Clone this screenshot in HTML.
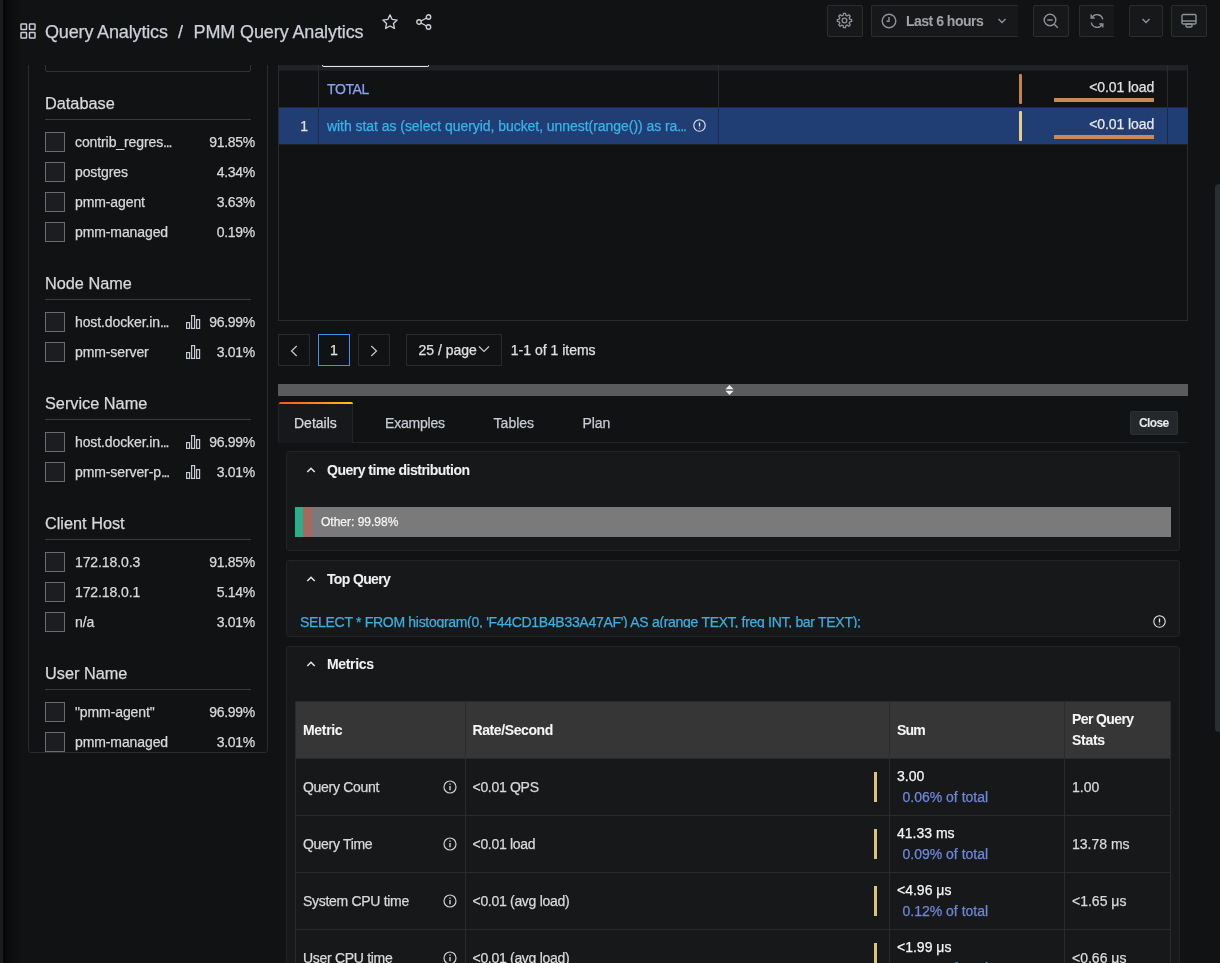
<!DOCTYPE html><html><head><meta charset="utf-8"><style>
*{box-sizing:border-box;margin:0;padding:0}
html,body{width:1220px;height:963px;overflow:hidden;background:#111214;font-family:"Liberation Sans",sans-serif;color:#d8d9da}
.a{position:absolute}
.t{position:absolute;white-space:nowrap;line-height:1;-webkit-text-stroke:0.25px currentColor}
.b{font-weight:bold;-webkit-text-stroke:0.05px currentColor}
.btn{position:absolute;top:5px;height:32px;border:1px solid #2b2e31;background:#17181a;border-radius:2px}
.cb{position:absolute;width:20px;height:20px;border:1px solid #6b6c70;background:#1c1d20}
.ul{position:absolute;width:206px;height:1px;background:#3a3b3f}
</style></head><body><div id="root" style="position:absolute;left:0;top:0;width:1220px;height:963px;will-change:transform">
<div class="a" style="left:0;top:0;width:3px;height:963px;background:#1b1c20"></div>
<div class="a" style="left:3px;top:0;width:18px;height:963px;background:linear-gradient(90deg,#08090a,rgba(17,18,20,0))"></div>
<div class="a" style="left:28px;top:30px;width:240px;height:723px;border:1px solid #2b2c2f;border-radius:3px"></div>
<div class="a" style="left:45px;top:30px;width:206px;height:42px;border:1px solid #2f3336;border-radius:2px"></div>
<div class="a" style="left:29px;top:65px;width:238px;height:687px;overflow:hidden">
<div class="t" style="left:16px;top:29.80px;font-size:16.3px;color:#d8d9da;">Database</div>
<div class="ul" style="left:16px;top:54px"></div>
<div class="cb" style="left:16px;top:67px"></div>
<div class="t" style="left:46px;top:70.45px;font-size:14px;color:#d8d9da;letter-spacing:-0.1px;">contrib_regres<span style="letter-spacing:-1.2px">...</span></div>
<div class="t" style="left:0;width:226px;text-align:right;top:70.45px;font-size:14px;letter-spacing:-0.3px">91.85%<span style="letter-spacing:0">&#8203;</span></div>
<div class="cb" style="left:16px;top:97px"></div>
<div class="t" style="left:46px;top:100.45px;font-size:14px;color:#d8d9da;letter-spacing:-0.1px;">postgres</div>
<div class="t" style="left:0;width:226px;text-align:right;top:100.45px;font-size:14px;letter-spacing:-0.3px">4.34%<span style="letter-spacing:0">&#8203;</span></div>
<div class="cb" style="left:16px;top:127px"></div>
<div class="t" style="left:46px;top:130.45px;font-size:14px;color:#d8d9da;letter-spacing:-0.1px;">pmm-agent</div>
<div class="t" style="left:0;width:226px;text-align:right;top:130.45px;font-size:14px;letter-spacing:-0.3px">3.63%<span style="letter-spacing:0">&#8203;</span></div>
<div class="cb" style="left:16px;top:157px"></div>
<div class="t" style="left:46px;top:160.45px;font-size:14px;color:#d8d9da;letter-spacing:-0.1px;">pmm-managed</div>
<div class="t" style="left:0;width:226px;text-align:right;top:160.45px;font-size:14px;letter-spacing:-0.3px">0.19%<span style="letter-spacing:0">&#8203;</span></div>
<div class="t" style="left:16px;top:209.70px;font-size:16.3px;color:#d8d9da;">Node Name</div>
<div class="ul" style="left:16px;top:234px"></div>
<div class="cb" style="left:16px;top:247px"></div>
<div class="t" style="left:46px;top:250.45px;font-size:14px;color:#d8d9da;letter-spacing:-0.1px;">host.docker.in<span style="letter-spacing:-1.2px">...</span></div>
<div class="t" style="left:0;width:226px;text-align:right;top:250.45px;font-size:14px;letter-spacing:-0.3px">96.99%<span style="letter-spacing:0">&#8203;</span></div>
<svg class="a" style="left:157px;top:250px" width="15" height="14" viewBox="0 0 15 14"><g fill="none" stroke="#c6c9d2" stroke-width="1.2"><rect x="0.6" y="7.6" width="3" height="5.8"/><rect x="5.6" y="0.6" width="3" height="12.8"/><rect x="10.6" y="4.6" width="3" height="8.8"/></g></svg>
<div class="cb" style="left:16px;top:277px"></div>
<div class="t" style="left:46px;top:280.45px;font-size:14px;color:#d8d9da;letter-spacing:-0.1px;">pmm-server</div>
<div class="t" style="left:0;width:226px;text-align:right;top:280.45px;font-size:14px;letter-spacing:-0.3px">3.01%<span style="letter-spacing:0">&#8203;</span></div>
<svg class="a" style="left:157px;top:280px" width="15" height="14" viewBox="0 0 15 14"><g fill="none" stroke="#c6c9d2" stroke-width="1.2"><rect x="0.6" y="7.6" width="3" height="5.8"/><rect x="5.6" y="0.6" width="3" height="12.8"/><rect x="10.6" y="4.6" width="3" height="8.8"/></g></svg>
<div class="t" style="left:16px;top:329.50px;font-size:16.3px;color:#d8d9da;">Service Name</div>
<div class="ul" style="left:16px;top:354px"></div>
<div class="cb" style="left:16px;top:367px"></div>
<div class="t" style="left:46px;top:370.45px;font-size:14px;color:#d8d9da;letter-spacing:-0.1px;">host.docker.in<span style="letter-spacing:-1.2px">...</span></div>
<div class="t" style="left:0;width:226px;text-align:right;top:370.45px;font-size:14px;letter-spacing:-0.3px">96.99%<span style="letter-spacing:0">&#8203;</span></div>
<svg class="a" style="left:157px;top:370px" width="15" height="14" viewBox="0 0 15 14"><g fill="none" stroke="#c6c9d2" stroke-width="1.2"><rect x="0.6" y="7.6" width="3" height="5.8"/><rect x="5.6" y="0.6" width="3" height="12.8"/><rect x="10.6" y="4.6" width="3" height="8.8"/></g></svg>
<div class="cb" style="left:16px;top:397px"></div>
<div class="t" style="left:46px;top:400.45px;font-size:14px;color:#d8d9da;letter-spacing:-0.1px;">pmm-server-p<span style="letter-spacing:-1.2px">...</span></div>
<div class="t" style="left:0;width:226px;text-align:right;top:400.45px;font-size:14px;letter-spacing:-0.3px">3.01%<span style="letter-spacing:0">&#8203;</span></div>
<svg class="a" style="left:157px;top:400px" width="15" height="14" viewBox="0 0 15 14"><g fill="none" stroke="#c6c9d2" stroke-width="1.2"><rect x="0.6" y="7.6" width="3" height="5.8"/><rect x="5.6" y="0.6" width="3" height="12.8"/><rect x="10.6" y="4.6" width="3" height="8.8"/></g></svg>
<div class="t" style="left:16px;top:449.50px;font-size:16.3px;color:#d8d9da;">Client Host</div>
<div class="ul" style="left:16px;top:474px"></div>
<div class="cb" style="left:16px;top:487px"></div>
<div class="t" style="left:46px;top:490.45px;font-size:14px;color:#d8d9da;letter-spacing:-0.1px;">172.18.0.3</div>
<div class="t" style="left:0;width:226px;text-align:right;top:490.45px;font-size:14px;letter-spacing:-0.3px">91.85%<span style="letter-spacing:0">&#8203;</span></div>
<div class="cb" style="left:16px;top:517px"></div>
<div class="t" style="left:46px;top:520.45px;font-size:14px;color:#d8d9da;letter-spacing:-0.1px;">172.18.0.1</div>
<div class="t" style="left:0;width:226px;text-align:right;top:520.45px;font-size:14px;letter-spacing:-0.3px">5.14%<span style="letter-spacing:0">&#8203;</span></div>
<div class="cb" style="left:16px;top:547px"></div>
<div class="t" style="left:46px;top:550.45px;font-size:14px;color:#d8d9da;letter-spacing:-0.1px;">n/a</div>
<div class="t" style="left:0;width:226px;text-align:right;top:550.45px;font-size:14px;letter-spacing:-0.3px">3.01%<span style="letter-spacing:0">&#8203;</span></div>
<div class="t" style="left:16px;top:599.50px;font-size:16.3px;color:#d8d9da;">User Name</div>
<div class="ul" style="left:16px;top:624px"></div>
<div class="cb" style="left:16px;top:637px"></div>
<div class="t" style="left:46px;top:640.45px;font-size:14px;color:#d8d9da;letter-spacing:-0.1px;">"pmm-agent"</div>
<div class="t" style="left:0;width:226px;text-align:right;top:640.45px;font-size:14px;letter-spacing:-0.3px">96.99%<span style="letter-spacing:0">&#8203;</span></div>
<div class="cb" style="left:16px;top:667px"></div>
<div class="t" style="left:46px;top:670.45px;font-size:14px;color:#d8d9da;letter-spacing:-0.1px;">pmm-managed</div>
<div class="t" style="left:0;width:226px;text-align:right;top:670.45px;font-size:14px;letter-spacing:-0.3px">3.01%<span style="letter-spacing:0">&#8203;</span></div>
</div>
<div class="a" style="left:278px;top:40px;width:910px;height:281px;border:1px solid #2a2b2e;border-top:none"></div>
<div class="a" style="left:279px;top:40px;width:909px;height:30px;background:#212226"></div>
<div class="a" style="left:279px;top:70px;width:908px;height:1px;background:#1a1b1e"></div>
<div class="a" style="left:318px;top:40px;width:1px;height:104px;background:#2a2b2e"></div>
<div class="a" style="left:718px;top:40px;width:1px;height:104px;background:#2a2b2e"></div>
<div class="a" style="left:1167px;top:40px;width:1px;height:104px;background:#2a2b2e"></div>
<div class="a" style="left:322px;top:40px;width:107px;height:27px;border:1.5px solid #e8e8e8;border-top:none;border-radius:0 0 2px 2px"></div>
<div class="t" style="left:327px;top:82.25px;font-size:14px;color:#8aa4f0;letter-spacing:-0.4px;">TOTAL</div>
<div class="a" style="left:1019px;top:74px;width:3px;height:30px;background:#c4834a;border-radius:1px"></div>
<div class="a" style="left:1054px;top:98px;width:100px;height:4px;background:#c98b52"></div>
<div class="t" style="right:66px;top:80.25px;font-size:14px;color:#e0e0e0;letter-spacing:-0.1px;margin-right:-0.1px;">&lt;0.01 load</div>
<div class="a" style="left:279px;top:107px;width:908px;height:1px;background:#2a2b2e"></div>
<div class="a" style="left:279px;top:108px;width:909px;height:36px;background:#203e73"></div>
<div class="a" style="left:318px;top:108px;width:1px;height:36px;background:#1a2b4c"></div>
<div class="a" style="left:718px;top:108px;width:1px;height:36px;background:#1a2b4c"></div>
<div class="a" style="left:1167px;top:108px;width:1px;height:36px;background:#1a2b4c"></div>
<div class="t" style="right:912px;top:119.15px;font-size:14px;color:#e0e0e0;">1</div>
<div class="t" style="left:327px;top:119.15px;font-size:14px;color:#3ab4e8;letter-spacing:-0.05px;">with stat as (select queryid, bucket, unnest(range()) as ra<span style="letter-spacing:-1px">...</span></div>
<svg class="a" style="left:693px;top:119px" width="13" height="13" viewBox="0 0 13 13"><circle cx="6.5" cy="6.5" r="5.7" fill="none" stroke="#e8e8e8" stroke-width="1.1"/><path d="M6.5 3.5v4M6.5 8.8v.8" stroke="#e8e8e8" stroke-width="1.3"/></svg>
<div class="a" style="left:1019px;top:111px;width:3px;height:30px;background:#e3cf8c;border-radius:1px"></div>
<div class="a" style="left:1054px;top:135px;width:100px;height:4px;background:#c98b52"></div>
<div class="t" style="right:66px;top:117.25px;font-size:14px;color:#e8e8e8;letter-spacing:-0.1px;margin-right:-0.1px;">&lt;0.01 load</div>
<div class="a" style="left:279px;top:144px;width:908px;height:1px;background:#1f2023"></div>
<div class="a" style="left:278px;top:334px;width:32px;height:32px;border:1px solid #2a2b2e"></div>
<div class="a" style="left:318px;top:334px;width:32px;height:32px;border:1px solid #3d8ff0"></div>
<div class="a" style="left:358px;top:334px;width:32px;height:32px;border:1px solid #2a2b2e"></div>
<div class="a" style="left:406px;top:334px;width:96px;height:32px;border:1px solid #2a2b2e"></div>
<svg class="a" style="left:288px;top:343px" width="12" height="14" viewBox="0 0 12 14"><path d="M8.7 3L3.5 8l5.2 5" fill="none" stroke="#c8c9ca" stroke-width="1.2"/></svg>
<svg class="a" style="left:368px;top:343px" width="12" height="14" viewBox="0 0 12 14"><path d="M3.3 3l5.2 5-5.2 5" fill="none" stroke="#c8c9ca" stroke-width="1.2"/></svg>
<div class="t" style="left:330px;top:343.25px;font-size:14px;color:#e0e0e0;">1</div>
<div class="t" style="left:418.5px;top:343.25px;font-size:14px;color:#e0e0e0;">25 / page</div>
<svg class="a" style="left:478px;top:344px" width="12" height="10" viewBox="0 0 12 10"><path d="M1 2.5l5 5 5-5" fill="none" stroke="#c8c9ca" stroke-width="1.2"/></svg>
<div class="t" style="left:510.8px;top:343.25px;font-size:14px;color:#e0e0e0;">1-1 of 1 items</div>
<div class="a" style="left:278px;top:384px;width:910px;height:12px;background:#5b5b5b"></div>
<svg class="a" style="left:724.5px;top:385px" width="9" height="10" viewBox="0 0 9 10"><path d="M4.5 0L8.6 4.2H0.4zM4.5 10L8.6 5.8H0.4z" fill="#ececec"/></svg>
<div class="a" style="left:278px;top:442px;width:910px;height:1px;background:#222326"></div>
<div class="a" style="left:278px;top:402px;width:75px;height:41px;background:#17181b;border:1px solid #222326;border-bottom:none"></div>
<div class="a" style="left:279px;top:402px;width:74px;height:2px;background:linear-gradient(90deg,#f05a28,#f7921e 60%,#fbca0a);border-radius:2px 2px 0 0"></div>
<div class="t" style="left:294px;top:416.15px;font-size:14px;color:#d8d9da;">Details</div>
<div class="t" style="left:385px;top:416.15px;font-size:14px;color:#c8cbd3;letter-spacing:-0.2px;">Examples</div>
<div class="t" style="left:493.6px;top:416.15px;font-size:14px;color:#c8cbd3;">Tables</div>
<div class="t" style="left:582.6px;top:416.15px;font-size:14px;color:#c8cbd3;letter-spacing:-0.15px;">Plan</div>
<div class="a" style="left:1130px;top:411px;width:48px;height:24px;background:#25282b;border:1px solid #2c3033;border-radius:2px"></div>
<div class="t b" style="left:1139px;top:416.84px;font-size:12px;color:#e8e8e8;letter-spacing:-0.6px;">Close</div>
<div class="a" style="left:286px;top:451px;width:894px;height:100px;background:#171819;border:1px solid #232426;border-radius:3px"></div>
<svg class="a" style="left:306px;top:466px" width="10" height="8" viewBox="0 0 10 8"><path d="M1.3 6L5 2.3 8.7 6" fill="none" stroke="#e8e8e8" stroke-width="1.5"/></svg>
<div class="t b" style="left:327px;top:463.15px;font-size:14px;color:#f0f0f0;letter-spacing:-0.5px;">Query time distribution</div>
<div class="a" style="left:295px;top:507px;width:876px;height:30px;background:#7a7a7a"></div>
<div class="a" style="left:295px;top:507px;width:8px;height:30px;background:#27b08c"></div>
<div class="a" style="left:303px;top:507px;width:9px;height:30px;background:#a8675f"></div>
<div class="t" style="left:321px;top:515.84px;font-size:12px;color:#f5f5f5;">Other: 99.98%</div>
<div class="a" style="left:286px;top:560px;width:894px;height:77px;background:#171819;border:1px solid #232426;border-radius:3px"></div>
<svg class="a" style="left:306px;top:575px" width="10" height="8" viewBox="0 0 10 8"><path d="M1.3 6L5 2.3 8.7 6" fill="none" stroke="#e8e8e8" stroke-width="1.5"/></svg>
<div class="t b" style="left:327px;top:572.15px;font-size:14px;color:#f0f0f0;letter-spacing:-0.65px;">Top Query</div>
<div class="a" style="left:290px;top:600px;width:850px;height:28px;overflow:hidden">
<div class="t" style="left:10px;top:15.15px;font-size:14px;color:#3ab0e0;letter-spacing:-0.3px;">SELECT * FROM histogram(0, 'F44CD1B4B33A47AF') AS a(range TEXT, freq INT, bar TEXT);</div>
</div>
<svg class="a" style="left:1153px;top:615px" width="13" height="13" viewBox="0 0 13 13"><circle cx="6.5" cy="6.5" r="5.7" fill="none" stroke="#e8e8e8" stroke-width="1.1"/><path d="M6.5 3.5v4M6.5 8.8v.8" stroke="#e8e8e8" stroke-width="1.3"/></svg>
<div class="a" style="left:286px;top:646px;width:894px;height:354px;background:#171819;border:1px solid #232426;border-radius:3px"></div>
<svg class="a" style="left:306px;top:660px" width="10" height="8" viewBox="0 0 10 8"><path d="M1.3 6L5 2.3 8.7 6" fill="none" stroke="#e8e8e8" stroke-width="1.5"/></svg>
<div class="t b" style="left:327px;top:656.75px;font-size:14px;color:#f0f0f0;letter-spacing:-0.33px;">Metrics</div>
<div class="a" style="left:295px;top:701px;width:876px;height:300px;border:1px solid #2a2b2e"></div>
<div class="a" style="left:296px;top:702px;width:874px;height:56px;background:#363636"></div>
<div class="a" style="left:465px;top:701px;width:1px;height:300px;background:#2a2b2e"></div>
<div class="a" style="left:889px;top:701px;width:1px;height:300px;background:#2a2b2e"></div>
<div class="a" style="left:1064px;top:701px;width:1px;height:300px;background:#2a2b2e"></div>
<div class="a" style="left:296px;top:758px;width:874px;height:1px;background:#2a2b2e"></div>
<div class="a" style="left:296px;top:815px;width:874px;height:1px;background:#2a2b2e"></div>
<div class="a" style="left:296px;top:872px;width:874px;height:1px;background:#2a2b2e"></div>
<div class="a" style="left:296px;top:929px;width:874px;height:1px;background:#2a2b2e"></div>
<div class="t b" style="left:303px;top:723.15px;font-size:14px;color:#f5f5f5;letter-spacing:-0.32px;">Metric</div>
<div class="t b" style="left:472.5px;top:723.15px;font-size:14px;color:#f5f5f5;letter-spacing:-0.4px;">Rate/Second</div>
<div class="t b" style="left:897px;top:723.15px;font-size:14px;color:#f5f5f5;letter-spacing:-0.8px;">Sum</div>
<div class="t b" style="left:1072px;top:712.15px;font-size:14px;color:#f5f5f5;letter-spacing:-0.6px;">Per Query</div>
<div class="t b" style="left:1072px;top:733.15px;font-size:14px;color:#f5f5f5;letter-spacing:-0.3px;">Stats</div>
<div class="t" style="left:303px;top:780.15px;font-size:14px;color:#d8d9da;letter-spacing:-0.3px;">Query Count</div>
<svg class="a" style="left:443px;top:780px" width="14" height="14" viewBox="0 0 14 14"><circle cx="7" cy="7" r="6" fill="none" stroke="#d0d0d0" stroke-width="1.2"/><path d="M7 6v4.2M7 3.6v1.2" stroke="#d0d0d0" stroke-width="1.4"/></svg>
<div class="t" style="left:472.5px;top:780.15px;font-size:14px;color:#d8d9da;letter-spacing:-0.3px;">&lt;0.01 QPS</div>
<div class="a" style="left:874px;top:772px;width:3px;height:30px;background:#d8c47c"></div>
<div class="t" style="left:897px;top:768.75px;font-size:14px;color:#f5f5f5;">3.00</div>
<div class="t" style="left:902.5px;top:789.85px;font-size:14px;color:#6e88d8;">0.06% of total</div>
<div class="t" style="left:1072px;top:780.15px;font-size:14px;color:#d8d9da;">1.00</div>
<div class="t" style="left:303px;top:837.15px;font-size:14px;color:#d8d9da;letter-spacing:-0.3px;">Query Time</div>
<svg class="a" style="left:443px;top:837px" width="14" height="14" viewBox="0 0 14 14"><circle cx="7" cy="7" r="6" fill="none" stroke="#d0d0d0" stroke-width="1.2"/><path d="M7 6v4.2M7 3.6v1.2" stroke="#d0d0d0" stroke-width="1.4"/></svg>
<div class="t" style="left:472.5px;top:837.15px;font-size:14px;color:#d8d9da;letter-spacing:-0.3px;">&lt;0.01 load</div>
<div class="a" style="left:874px;top:829px;width:3px;height:30px;background:#d8c47c"></div>
<div class="t" style="left:897px;top:825.75px;font-size:14px;color:#f5f5f5;">41.33 ms</div>
<div class="t" style="left:902.5px;top:846.85px;font-size:14px;color:#6e88d8;">0.09% of total</div>
<div class="t" style="left:1072px;top:837.15px;font-size:14px;color:#d8d9da;">13.78 ms</div>
<div class="t" style="left:303px;top:894.15px;font-size:14px;color:#d8d9da;letter-spacing:-0.3px;">System CPU time</div>
<svg class="a" style="left:443px;top:894px" width="14" height="14" viewBox="0 0 14 14"><circle cx="7" cy="7" r="6" fill="none" stroke="#d0d0d0" stroke-width="1.2"/><path d="M7 6v4.2M7 3.6v1.2" stroke="#d0d0d0" stroke-width="1.4"/></svg>
<div class="t" style="left:472.5px;top:894.15px;font-size:14px;color:#d8d9da;letter-spacing:-0.3px;">&lt;0.01 (avg load)</div>
<div class="a" style="left:874px;top:886px;width:3px;height:30px;background:#d8c47c"></div>
<div class="t" style="left:897px;top:882.75px;font-size:14px;color:#f5f5f5;">&lt;4.96 μs</div>
<div class="t" style="left:902.5px;top:903.85px;font-size:14px;color:#6e88d8;">0.12% of total</div>
<div class="t" style="left:1072px;top:894.15px;font-size:14px;color:#d8d9da;">&lt;1.65 μs</div>
<div class="t" style="left:303px;top:951.15px;font-size:14px;color:#d8d9da;letter-spacing:-0.3px;">User CPU time</div>
<svg class="a" style="left:443px;top:951px" width="14" height="14" viewBox="0 0 14 14"><circle cx="7" cy="7" r="6" fill="none" stroke="#d0d0d0" stroke-width="1.2"/><path d="M7 6v4.2M7 3.6v1.2" stroke="#d0d0d0" stroke-width="1.4"/></svg>
<div class="t" style="left:472.5px;top:951.15px;font-size:14px;color:#d8d9da;letter-spacing:-0.3px;">&lt;0.01 (avg load)</div>
<div class="a" style="left:874px;top:943px;width:3px;height:30px;background:#d8c47c"></div>
<div class="t" style="left:897px;top:939.75px;font-size:14px;color:#f5f5f5;">&lt;1.99 μs</div>
<div class="t" style="left:902.5px;top:960.85px;font-size:14px;color:#6e88d8;">0.05% of total</div>
<div class="t" style="left:1072px;top:951.15px;font-size:14px;color:#d8d9da;">&lt;0.66 μs</div>
<div class="a" style="left:1215px;top:184px;width:8px;height:548px;background:#2b2e31;border-radius:4px"></div>
<div class="a" style="left:21px;top:0;width:1199px;height:65px;background:#111214"></div>
<svg class="a" style="left:20px;top:23px" width="16" height="16" viewBox="0 0 16 16"><g fill="none" stroke="#c7c8d2" stroke-width="1.5"><rect x="1" y="1" width="5.5" height="5.5" rx="0.5"/><rect x="9.5" y="1" width="5.5" height="5.5" rx="0.5"/><rect x="1" y="9.5" width="5.5" height="5.5" rx="0.5"/><rect x="9.5" y="9.5" width="5.5" height="5.5" rx="0.5"/></g></svg>
<div class="t" style="left:45px;top:22.76px;font-size:18px;color:#cdd0da;letter-spacing:-0.15px;">Query Analytics</div>
<div class="t" style="left:178px;top:22.76px;font-size:18px;color:#cdd0da;">/</div>
<div class="t" style="left:193.5px;top:22.76px;font-size:18px;color:#cdd0da;letter-spacing:-0.11px;">PMM Query Analytics</div>
<svg class="a" style="left:381px;top:13px" width="18" height="18" viewBox="0 0 24 24"><path d="M12 2.5l2.9 6.1 6.6.8-4.9 4.6 1.3 6.6L12 17.3l-5.9 3.3 1.3-6.6-4.9-4.6 6.6-.8z" fill="none" stroke="#cdd0da" stroke-width="1.8" stroke-linejoin="round"/></svg>
<svg class="a" style="left:416px;top:14px" width="16" height="16" viewBox="0 0 16 16"><g fill="none" stroke="#cdd0da" stroke-width="1.4"><circle cx="12.5" cy="3" r="2.2"/><circle cx="3" cy="8" r="2.2"/><circle cx="12.5" cy="13" r="2.2"/><path d="M5 7l5.5-3M5 9l5.5 3"/></g></svg>
<div class="btn" style="left:827px;width:36px"></div>
<svg class="a" style="left:836px;top:12px" width="17" height="17" viewBox="0 0 24 24"><path fill="none" stroke="#8f9298" stroke-width="1.9" stroke-linejoin="round" d="M22.11 10.64 L22.11 13.36 L19.35 13.95 L18.57 15.82 L20.11 18.19 L18.19 20.11 L15.82 18.57 L13.95 19.35 L13.36 22.11 L10.64 22.11 L10.05 19.35 L8.18 18.57 L5.81 20.11 L3.89 18.19 L5.43 15.82 L4.65 13.95 L1.89 13.36 L1.89 10.64 L4.65 10.05 L5.43 8.18 L3.89 5.81 L5.81 3.89 L8.18 5.43 L10.05 4.65 L10.64 1.89 L13.36 1.89 L13.95 4.65 L15.82 5.43 L18.19 3.89 L20.11 5.81 L18.57 8.18 L19.35 10.05Z"/><circle cx="12" cy="12" r="3.3" fill="none" stroke="#8f9298" stroke-width="1.9"/></svg>
<div class="btn" style="left:871px;width:147px;border-right:none;border-radius:2px 0 0 2px"></div>
<svg class="a" style="left:881px;top:13px" width="16" height="16" viewBox="0 0 16 16"><g fill="none" stroke="#8f9298" stroke-width="1.4"><circle cx="8" cy="8" r="6.8"/><path d="M8 4v4.3H5.5"/></g></svg>
<div class="t b" style="left:906px;top:14.15px;font-size:14px;color:#9fa1a6;letter-spacing:-0.5px;">Last 6 hours</div>
<svg class="a" style="left:997px;top:17px" width="10" height="8" viewBox="0 0 10 8"><path d="M1.5 2l3.5 3.5L8.5 2" fill="none" stroke="#8f9298" stroke-width="1.4"/></svg>
<div class="btn" style="left:1033px;width:36px"></div>
<svg class="a" style="left:1043px;top:13px" width="16" height="16" viewBox="0 0 16 16"><g fill="none" stroke="#8f9298" stroke-width="1.4"><circle cx="7" cy="7" r="5.8"/><path d="M4.3 7h5.4M11.2 11.2l3.6 3.6"/></g></svg>
<div class="btn" style="left:1079px;width:35px;border-right:none;border-radius:2px 0 0 2px"></div>
<svg class="a" style="left:1089px;top:13px" width="16" height="16" viewBox="0 0 16 16"><g fill="none" stroke="#8f9298" stroke-width="1.4"><path d="M2.3 9.5a5.8 5.8 0 0 0 10.8 1.8M13.7 6.5A5.8 5.8 0 0 0 2.9 4.7"/><path d="M2.2 1.5v3.5h3.5M13.8 14.5v-3.5h-3.5"/></g></svg>
<div class="btn" style="left:1129px;width:34px"></div>
<svg class="a" style="left:1141px;top:17px" width="10" height="8" viewBox="0 0 10 8"><path d="M1.5 2l3.5 3.5L8.5 2" fill="none" stroke="#8f9298" stroke-width="1.4"/></svg>
<div class="btn" style="left:1171px;width:36px"></div>
<svg class="a" style="left:1181px;top:13px" width="16" height="16" viewBox="0 0 16 16"><g fill="none" stroke="#8f9298" stroke-width="1.4"><rect x="1" y="1.5" width="14" height="9.5" rx="1.3"/><path d="M1 8h14"/><rect x="5" y="11" width="6" height="3" rx="1"/></g></svg>
</div></body></html>
